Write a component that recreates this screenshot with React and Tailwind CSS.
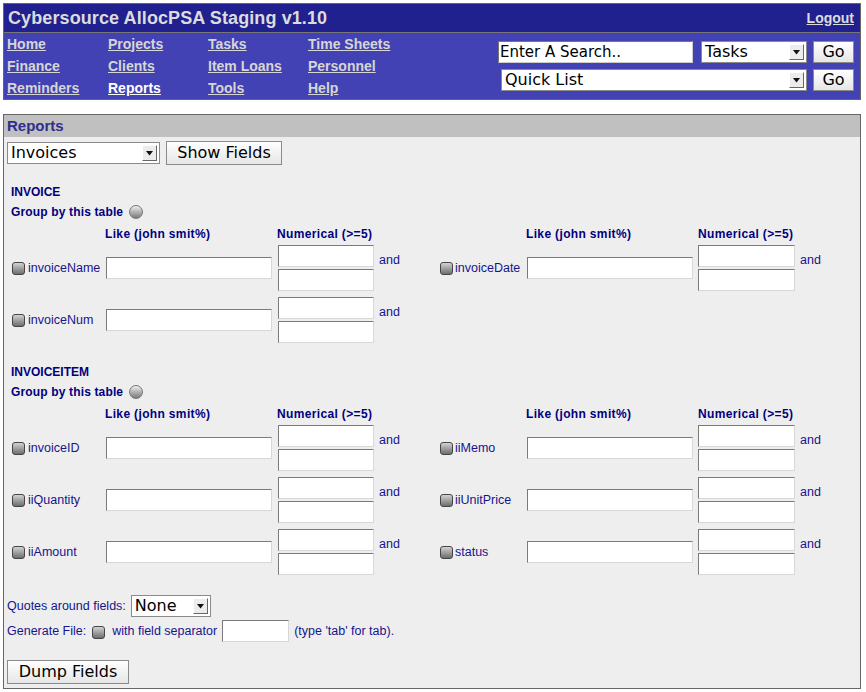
import React from 'react';

const navLinks = [
  ['Home', 'Projects', 'Tasks', 'Time Sheets'],
  ['Finance', 'Clients', 'Item Loans', 'Personnel'],
  ['Reminders', 'Reports', 'Tools', 'Help'],
];

const sections = [
  {
    title: 'INVOICE',
    rows: [
      ['invoiceName', 'invoiceDate'],
      ['invoiceNum', null],
    ],
  },
  {
    title: 'INVOICEITEM',
    rows: [
      ['invoiceID', 'iiMemo'],
      ['iiQuantity', 'iiUnitPrice'],
      ['iiAmount', 'status'],
    ],
  },
];

function TextBox({ className = '' }) {
  return (
    <input
      type="text"
      className={`h-[22px] bg-white border border-t-[#7a7a7a] border-l-[#7a7a7a] border-b-[#d8d8d8] border-r-[#d8d8d8] outline-none ${className}`}
    />
  );
}

function Arrow() {
  return (
    <span className="w-[15px] my-[2px] mr-[2px] bg-[#ececec] border border-t-[#fff] border-l-[#fff] border-b-[#666] border-r-[#666] flex items-center justify-center">
      <svg width="7" height="5" viewBox="0 0 7 5">
        <polygon points="0,0 7,0 3.5,4.5" fill="#111" />
      </svg>
    </span>
  );
}

function Dropdown({ value, className = '' }) {
  return (
    <div className={`h-[22px] flex bg-white border border-[#8a8a8a] ${className}`}>
      <span className="flex-1 flex items-center pl-[3px] text-black text-[16px] leading-none font-['DejaVu_Sans',sans-serif]">{value}</span>
      <Arrow />
    </div>
  );
}

function Button({ children, className = '', small }) {
  return (
    <button className={`${small ? 'h-[22px]' : 'h-[24px]'} bg-linear-to-b from-[#ffffff] to-[#e6e6e6] border border-[#8a8a8a] text-black text-[16px] leading-none font-['DejaVu_Sans',sans-serif] ${className}`}>
      {children}
    </button>
  );
}

function Check() {
  return <span className="inline-block w-[13px] h-[13px] rounded-[3px] border border-[#444] bg-linear-to-b from-[#d4d4d4] to-[#6e6e6e] shrink-0" />;
}

function Radio() {
  return <span className="inline-block w-[14px] h-[14px] rounded-full border border-[#777] bg-linear-to-b from-[#f0f0f0] to-[#7a7a7a]" />;
}

function FieldCells({ name, right }) {
  if (!name) return [<div key="a" />, <div key="b" />, <div key="c" />, <div key="d" />];
  return [
    <div key="a" className={`flex items-center ${right ? 'pl-[4px] gap-[2px]' : 'pl-[1px] gap-[3px]'}`}>
      <Check />
      <span className="text-[12.5px] text-[#15158f]">{name}</span>
    </div>,
    <div key="b" className="flex items-center">
      <TextBox className="w-[166px]" />
    </div>,
    <div key="c" className="flex flex-col gap-[2px]">
      <TextBox className={right ? 'w-[97px]' : 'w-[96px]'} />
      <TextBox className={right ? 'w-[97px]' : 'w-[96px]'} />
    </div>,
    <div key="d" className="pl-[3px] pt-[8px] text-[12.5px] leading-[14px] text-[#15158f]">and</div>,
  ];
}

const cols = 'grid grid-cols-[95px_172px_98px_60px_91px_171px_99px_60px]';

function Section({ title, rows, first }) {
  return (
    <div className={`pl-[4px] ${first ? 'mt-[19px]' : 'mt-[21px]'}`}>
      <div className="h-[16px] flex items-center text-[12px] font-bold text-[#000080]">{title}</div>
      <div className="mt-[2px] h-[20px] flex items-center gap-[6px] text-[12px] font-bold tracking-[0.15px] text-[#000080]">
        Group by this table <Radio />
      </div>
      <div className={`${cols} mt-[3px] h-[16px] items-center text-[12px] font-bold tracking-[0.35px] text-[#000080]`}>
        <div />
        <div className="-ml-px">Like (john smit%)</div>
        <div className="-ml-px">Numerical (&gt;=5)</div>
        <div />
        <div />
        <div className="-ml-px">Like (john smit%)</div>
        <div>Numerical (&gt;=5)</div>
        <div />
      </div>
      <div className={`${cols} mt-[4px] gap-y-[6px]`}>
        {rows.map(([l, r]) => (
          <React.Fragment key={l}>
            {FieldCells({ name: l, right: false })}
            {FieldCells({ name: r, right: true })}
          </React.Fragment>
        ))}
      </div>
    </div>
  );
}

export default function App() {
  return (
    <div className="w-[866px] h-[692px] bg-white pt-[3px] pl-[3px] font-['Liberation_Sans',Arial,sans-serif]">
      <div className="w-[858px] border border-[#666]">
        <div className="h-[28px] bg-[#20208f] flex items-center justify-between pl-[4px] pr-[6px]">
          <span className="text-[18px] font-bold tracking-[0.1px] text-[#dcdcdc]">Cybersource AllocPSA Staging v1.10</span>
          <a href="#" className="text-[14px] font-bold text-[#dcdcdc] underline">Logout</a>
        </div>
        <div className="h-px bg-[#777]" />
        <div className="h-[66px] bg-[#4242b4] flex justify-between">
          <div className="grid grid-cols-[101px_100px_100px_100px] pl-[3px]">
            {navLinks.flat().map((l) => (
              <div key={l} className="h-[22px] flex items-center">
                <a href="#" className={`text-[14px] font-bold underline ${l === 'Reports' ? 'text-white' : 'text-[#d6d6d6]'}`}>{l}</a>
              </div>
            ))}
          </div>
          <div className="flex flex-col items-end pt-[8px] pr-[6px] gap-[6px]">
            <div className="flex items-center">
              <div className="w-[195px] h-[22px] bg-white border border-t-[#777] border-l-[#777] border-b-[#ccc] border-r-[#ccc] flex items-center pl-[1px] text-[15px] leading-none text-black font-['DejaVu_Sans',sans-serif]">
                Enter A Search..
              </div>
              <Dropdown value="Tasks" className="w-[106px] ml-[8px]" />
              <Button small className="w-[41px] ml-[6px]">Go</Button>
            </div>
            <div className="flex items-center">
              <Dropdown value="Quick List" className="w-[306px]" />
              <Button small className="w-[41px] ml-[6px]">Go</Button>
            </div>
          </div>
        </div>
      </div>

      <div className="w-[858px] mt-[14px] border border-[#666]">
        <div className="h-[22px] bg-[#c0c0c0] flex items-center pl-[3px] text-[15px] font-bold text-[#2e2e8e]">Reports</div>
        <div className="bg-[#eeeeee] pl-[3px] pt-[4px] pb-[4px]">
          <div className="flex items-center h-[24px]">
            <Dropdown value="Invoices" className="w-[153px]" />
            <Button className="w-[116px] ml-[6px]">Show Fields</Button>
          </div>

          {sections.map((s, i) => (
            <Section key={s.title} {...s} first={i === 0} />
          ))}

          <div className="mt-[20px] flex items-end h-[22px] text-[12.5px] text-[#15158f]">
            <span className="mb-[1px]">Quotes around fields:</span>
            <Dropdown value="None" className="w-[80px] ml-[5px]" />
          </div>
          <div className="mt-[3px] flex items-center h-[22px] text-[12.5px] text-[#15158f]">
            <span>Generate File:</span>
            <span className="ml-[6px] mt-[3px] flex"><Check /></span>
            <span className="ml-[7px]">with field separator</span>
            <TextBox className="w-[67px] ml-[5px]" />
            <span className="ml-[5px]">(type 'tab' for tab).</span>
          </div>
          <Button className="mt-[18px] w-[122px] block">Dump Fields</Button>
        </div>
      </div>
    </div>
  );
}
